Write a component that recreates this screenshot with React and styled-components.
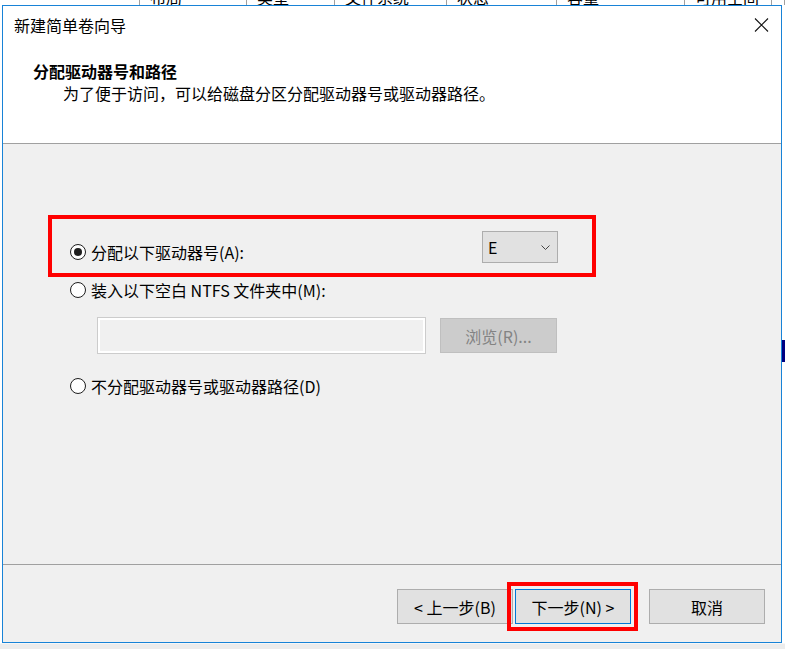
import styled, { createGlobalStyle } from 'styled-components'

const GlobalStyle = createGlobalStyle`
  html, body {
    margin: 0;
    padding: 0;
  }
  body {
    font-family: "Noto Sans CJK SC", "Noto Sans", sans-serif;
    background: #ffffff;
  }
`

const Desktop = styled.div`
    width: 785px;
    height: 649px;
    overflow: hidden;
    display: flex;
    flex-direction: column;
    background: #ffffff;
`

const BackHeader = styled.div`
    height: 5px;
    flex-shrink: 0;
    display: flex;
    overflow: hidden;
`

const BackCol = styled.div`
    flex: 0 0 ${p => p.w}px;
    box-sizing: border-box;
    border-right: 1px solid #a0a0a0;
    padding-left: 10px;
    font-size: 16px;
    line-height: 16px;
    color: #000;
    span {
        display: block;
        margin-top: -11px;
    }
`

const Middle = styled.div`
    display: flex;
    height: 638px;
    flex-shrink: 0;
`

const SideStrip = styled.div`
    flex: 0 0 ${p => p.w}px;
    background: #ffffff;
    display: flex;
    flex-direction: column;
`

const StripMark = styled.div`
    height: ${p => p.h}px;
    margin-top: ${p => p.top}px;
    background: ${p => p.color};
`

const BottomStrip = styled.div`
    flex: 1;
    background: #ececec;
    border-top: 1px solid #f7f7f7;
`

const Dialog = styled.div`
    flex: 0 0 780px;
    box-sizing: border-box;
    border: 1px solid #1883d7;
    display: flex;
    flex-direction: column;
    background: #f0f0f0;
`

const TitleBar = styled.div`
    height: 38px;
    flex-shrink: 0;
    background: #fff;
    display: flex;
    align-items: center;
    justify-content: space-between;
    padding-left: 11px;
    font-size: 16px;
    color: #000;
`

const CloseBox = styled.div`
    width: 40px;
    height: 38px;
    display: flex;
    align-items: center;
    justify-content: center;
`

const Header = styled.div`
    height: 100px;
    flex-shrink: 0;
    box-sizing: border-box;
    background: #fff;
    border-bottom: 1px solid #a0a0a0;
    padding: 16px 0 0 30px;
`

const HeaderTitle = styled.div`
    font-size: 16px;
    line-height: 22px;
    font-weight: bold;
    color: #000;
`

const HeaderSub = styled.div`
    font-size: 16px;
    line-height: 22px;
    padding-left: 30px;
    color: #000;
`

const Body = styled.div`
    flex: 1;
    padding: 87px 0 0 67px;
    display: flex;
    flex-direction: column;
    align-items: flex-start;
`

const Highlight = styled.div`
    position: relative;
    &::after {
        content: "";
        position: absolute;
        left: ${p => p.l}px;
        top: ${p => p.t}px;
        width: ${p => p.w}px;
        height: ${p => p.h}px;
        box-sizing: border-box;
        border: 4px solid #ff0000;
        pointer-events: none;
    }
`

const DriveRow = styled.div`
    display: flex;
    align-items: flex-end;
    height: 32px;
`

const OptionRow = styled.label`
    display: flex;
    align-items: center;
    gap: 5px;
    height: 22px;
    font-size: 16px;
    color: #000;
    margin-top: ${p => p.mt || 0}px;
    flex: 0 0 ${p => (p.w ? p.w + 'px' : 'auto')};
`

const Radio = styled.span`
    width: 16px;
    height: 16px;
    box-sizing: border-box;
    border: 1.5px solid #1e1e1e;
    border-radius: 50%;
    background: #fff;
    display: flex;
    align-items: center;
    justify-content: center;
    flex-shrink: 0;
    &::after {
        content: "";
        display: ${p => (p.checked ? 'block' : 'none')};
        width: 8px;
        height: 8px;
        border-radius: 50%;
        background: #1e1e1e;
    }
`

const Select = styled.div`
    width: 76px;
    height: 32px;
    box-sizing: border-box;
    background: #e1e1e1;
    border: 1px solid #adadad;
    display: flex;
    align-items: center;
    justify-content: space-between;
    padding: 0 7px 0 5px;
    font-size: 16px;
    color: #000;
`

const PathRow = styled.div`
    display: flex;
    align-items: center;
    gap: 14px;
    margin: 16px 0 0 27px;
`

const PathInput = styled.div`
    width: 329px;
    height: 37px;
    box-sizing: border-box;
    background: #f0f0f0;
    border: 1px solid #cccccc;
    box-shadow: inset 0 0 0 2px #ffffff;
`

const Button = styled.div`
    width: ${p => p.w || 116}px;
    height: 35px;
    box-sizing: border-box;
    display: flex;
    align-items: center;
    justify-content: center;
    font-size: 16px;
    background: ${p => (p.disabled ? '#cccccc' : '#e1e1e1')};
    border: 1px solid ${p => (p.disabled ? '#bfbfbf' : p.focused ? '#0078d7' : '#adadad')};
    color: ${p => (p.disabled ? '#838383' : '#000')};
    margin-left: ${p => p.ml || 0}px;
`

const Footer = styled.div`
    height: 78px;
    flex-shrink: 0;
    box-sizing: border-box;
    border-top: 1px solid #a0a0a0;
    display: flex;
    justify-content: flex-end;
    align-items: flex-start;
    padding: 24px 16px 0 0;
`

const backCols = [
    { w: 140, t: '' },
    { w: 107, t: '布局' },
    { w: 88, t: '类型' },
    { w: 112, t: '文件系统' },
    { w: 110, t: '状态' },
    { w: 128, t: '容量' },
    { w: 87, t: '可用空间' },
    { w: 13, t: '' },
]

export default function App() {
    return (
        <Desktop>
            <GlobalStyle />
            <BackHeader>
                {backCols.map((c, i) => (
                    <BackCol key={i} w={c.w}><span>{c.t}</span></BackCol>
                ))}
            </BackHeader>
            <Middle>
                <SideStrip w={2} />
                <Dialog>
                    <TitleBar>
                        <span>新建简单卷向导</span>
                        <CloseBox>
                            <svg width="15" height="14" viewBox="0 0 15 14">
                                <path d="M1 0.5 L14 13.5 M14 0.5 L1 13.5" stroke="#111" strokeWidth="1.1" fill="none" />
                            </svg>
                        </CloseBox>
                    </TitleBar>
                    <Header>
                        <HeaderTitle>分配驱动器号和路径</HeaderTitle>
                        <HeaderSub>为了便于访问，可以给磁盘分区分配驱动器号或驱动器路径。</HeaderSub>
                    </Header>
                    <Body>
                        <Highlight l={-22} t={-16} w={548} h={62}>
                            <DriveRow>
                                <OptionRow w={412}>
                                    <Radio checked />
                                    分配以下驱动器号(A):
                                </OptionRow>
                                <Select>
                                    <span>E</span>
                                    <svg width="9" height="5" viewBox="0 0 9 5">
                                        <path d="M0.5 0.5 L4.5 4.5 L8.5 0.5" stroke="#444" strokeWidth="1" fill="none" />
                                    </svg>
                                </Select>
                            </DriveRow>
                        </Highlight>
                        <OptionRow mt={16}>
                            <Radio />
                            装入以下空白 NTFS 文件夹中(M):
                        </OptionRow>
                        <PathRow>
                            <PathInput />
                            <Button disabled w={117}>浏览(R)...</Button>
                        </PathRow>
                        <OptionRow mt={21}>
                            <Radio />
                            不分配驱动器号或驱动器路径(D)
                        </OptionRow>
                    </Body>
                    <Footer>
                        <Button>&lt; 上一步(B)</Button>
                        <Highlight l={-6} t={-7} w={131} h={49}>
                            <Button focused ml={2}>下一步(N) &gt;</Button>
                        </Highlight>
                        <Button ml={18}>取消</Button>
                    </Footer>
                </Dialog>
                <SideStrip w={3}>
                    <StripMark top={335} h={22} color="#000080" />
                </SideStrip>
            </Middle>
            <BottomStrip />
        </Desktop>
    )
}
